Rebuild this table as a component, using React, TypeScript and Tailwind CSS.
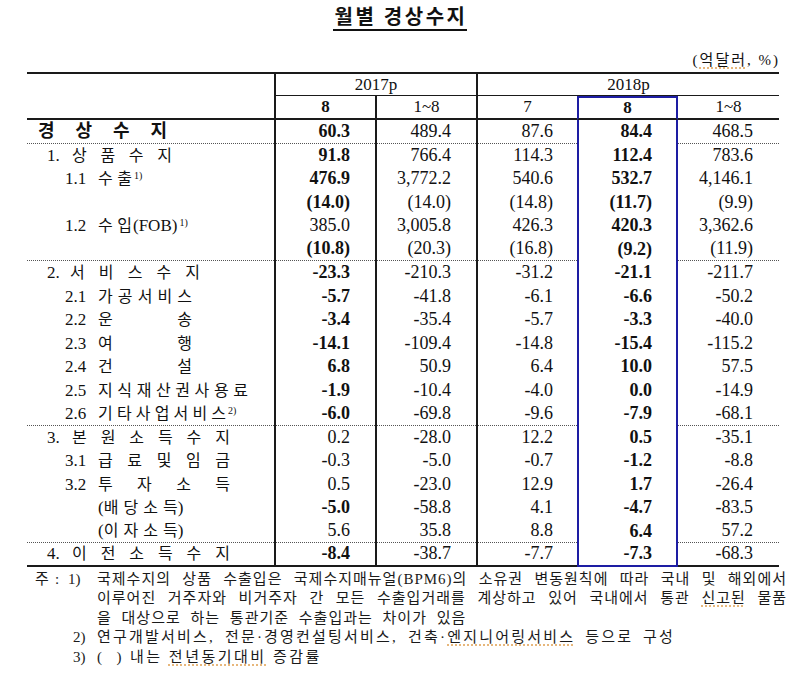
import React from 'react';

type Row = {
  label: React.ReactNode;
  v: string[];
  a: boolean;
  sep?: boolean;
};

const Sp = ({ t, w }: { t: string; w: string }) => (
  <span className={`inline-flex justify-between ${w}`}>
    {Array.from(t).map((c, i) => (
      <span key={i}>{c}</span>
    ))}
  </span>
);

const Pre = ({ children, w }: { children: React.ReactNode; w: string }) => (
  <span className={`inline-block text-[17px] ${w}`}>{children}</span>
);

const Sup = ({ children }: { children: React.ReactNode }) => (
  <sup className="text-[10px] ml-[2px]">{children}</sup>
);

const rows: Row[] = [
  {
    label: (
      <div className="pl-[11px] text-[18px] font-bold">
        <Sp t="경상수지" w="w-[129px]" />
      </div>
    ),
    v: ['60.3', '489.4', '87.6', '84.4', '468.5'],
    a: true,
    sep: true,
  },
  {
    label: (
      <div className="pl-[20px]">
        <Pre w="w-[25px]">1.</Pre>
        <Sp t="상품수지" w="w-[100px]" />
      </div>
    ),
    v: ['91.8', '766.4', '114.3', '112.4', '783.6'],
    a: true,
  },
  {
    label: (
      <div className="pl-[38px]">
        <Pre w="w-[33px]">1.1</Pre>
        <Sp t="수출" w="w-[34px]" />
        <Sup>1)</Sup>
      </div>
    ),
    v: ['476.9', '3,772.2', '540.6', '532.7', '4,146.1'],
    a: true,
  },
  { label: null, v: ['(14.0)', '(14.0)', '(14.8)', '(11.7)', '(9.9)'], a: true },
  {
    label: (
      <div className="pl-[38px]">
        <Pre w="w-[33px]">1.2</Pre>
        <Sp t="수입" w="w-[34px]" />
        <span className="text-[17px] ml-[1px]">(FOB)</span>
        <Sup>1)</Sup>
      </div>
    ),
    v: ['385.0', '3,005.8', '426.3', '420.3', '3,362.6'],
    a: false,
  },
  { label: null, v: ['(10.8)', '(20.3)', '(16.8)', '(9.2)', '(11.9)'], a: true, sep: true },
  {
    label: (
      <div className="pl-[20px]">
        <Pre w="w-[23px]">2.</Pre>
        <Sp t="서비스수지" w="w-[130px]" />
      </div>
    ),
    v: ['-23.3', '-210.3', '-31.2', '-21.1', '-211.7'],
    a: true,
  },
  {
    label: (
      <div className="pl-[38px]">
        <Pre w="w-[33px]">2.1</Pre>
        <Sp t="가공서비스" w="w-[94px]" />
      </div>
    ),
    v: ['-5.7', '-41.8', '-6.1', '-6.6', '-50.2'],
    a: true,
  },
  {
    label: (
      <div className="pl-[38px]">
        <Pre w="w-[33px]">2.2</Pre>
        <Sp t="운송" w="w-[94px]" />
      </div>
    ),
    v: ['-3.4', '-35.4', '-5.7', '-3.3', '-40.0'],
    a: true,
  },
  {
    label: (
      <div className="pl-[38px]">
        <Pre w="w-[33px]">2.3</Pre>
        <Sp t="여행" w="w-[94px]" />
      </div>
    ),
    v: ['-14.1', '-109.4', '-14.8', '-15.4', '-115.2'],
    a: true,
  },
  {
    label: (
      <div className="pl-[38px]">
        <Pre w="w-[33px]">2.4</Pre>
        <Sp t="건설" w="w-[94px]" />
      </div>
    ),
    v: ['6.8', '50.9', '6.4', '10.0', '57.5'],
    a: true,
  },
  {
    label: (
      <div className="pl-[38px]">
        <Pre w="w-[33px]">2.5</Pre>
        <Sp t="지식재산권사용료" w="w-[150px]" />
      </div>
    ),
    v: ['-1.9', '-10.4', '-4.0', '0.0', '-14.9'],
    a: true,
  },
  {
    label: (
      <div className="pl-[38px]">
        <Pre w="w-[33px]">2.6</Pre>
        <Sp t="기타사업서비스" w="w-[128px]" />
        <Sup>2)</Sup>
      </div>
    ),
    v: ['-6.0', '-69.8', '-9.6', '-7.9', '-68.1'],
    a: true,
    sep: true,
  },
  {
    label: (
      <div className="pl-[20px]">
        <Pre w="w-[25px]">3.</Pre>
        <Sp t="본원소득수지" w="w-[158px]" />
      </div>
    ),
    v: ['0.2', '-28.0', '12.2', '0.5', '-35.1'],
    a: false,
  },
  {
    label: (
      <div className="pl-[38px]">
        <Pre w="w-[33px]">3.1</Pre>
        <Sp t="급료및임금" w="w-[132px]" />
      </div>
    ),
    v: ['-0.3', '-5.0', '-0.7', '-1.2', '-8.8'],
    a: false,
  },
  {
    label: (
      <div className="pl-[38px]">
        <Pre w="w-[33px]">3.2</Pre>
        <Sp t="투자소득" w="w-[132px]" />
      </div>
    ),
    v: ['0.5', '-23.0', '12.9', '1.7', '-26.4'],
    a: false,
  },
  {
    label: (
      <div className="pl-[71px]">
        <span className="text-[17px]">(</span>
        <Sp t="배당소득" w="w-[74px]" />
        <span className="text-[17px]">)</span>
      </div>
    ),
    v: ['-5.0', '-58.8', '4.1', '-4.7', '-83.5'],
    a: true,
  },
  {
    label: (
      <div className="pl-[71px]">
        <span className="text-[17px]">(</span>
        <Sp t="이자소득" w="w-[74px]" />
        <span className="text-[17px]">)</span>
      </div>
    ),
    v: ['5.6', '35.8', '8.8', '6.4', '57.2'],
    a: false,
    sep: true,
  },
  {
    label: (
      <div className="pl-[20px]">
        <Pre w="w-[25px]">4.</Pre>
        <Sp t="이전소득수지" w="w-[158px]" />
      </div>
    ),
    v: ['-8.4', '-38.7', '-7.7', '-7.3', '-68.3'],
    a: true,
  },
];

const Cell = ({
  cls,
  inner,
  sep,
  children,
}: {
  cls: string;
  inner: string;
  sep?: boolean;
  children?: React.ReactNode;
}) => (
  <div className={`h-[23.5px] flex flex-col ${cls}`}>
    <div className={`flex-1 min-h-0 flex items-center whitespace-nowrap ${inner}`}>{children}</div>
    {sep ? <div className="h-0 border-t border-dotted border-t-[#555555]" /> : null}
  </div>
);

const Sq = ({ children }: { children: React.ReactNode }) => (
  <span className="underline decoration-dotted decoration-[#e0a050] underline-offset-[3px]">{children}</span>
);

export default function App() {
  return (
    <div className="w-[800px] h-[678px] bg-white text-[#111111] overflow-hidden font-['Liberation_Serif','Noto_Sans_CJK_KR',serif]">
      <div className="pt-[6px] text-center">
        <span className="inline-block text-[20px] leading-[23px] font-bold tracking-[2.5px] pl-[2px] border-b-2 border-[#111111]">
          월별 경상수지
        </span>
      </div>
      <div className="mt-[20px] w-[780px] text-right text-[15px] leading-[18px] tracking-[2px]">
        (<Sq>억달러</Sq>, %)
      </div>

      <div className="ml-[27px] mt-[3px] w-[752px] grid grid-cols-[247px_101px_101px_101px_101px_101px] border-t-2 border-t-[#1a1a1a] text-[17px]">
        {/* header */}
        <div className="row-span-2 border-b-2 border-b-[#1a1a1a]" />
        <div className="col-span-2 h-[22px] border-l-2 border-l-[#1a1a1a] border-b border-b-[#1a1a1a] flex items-center justify-center">
          2017p
        </div>
        <div className="col-span-3 h-[22px] border-l-2 border-l-[#1a1a1a] border-b border-b-[#1a1a1a] flex items-center justify-center">
          2018p
        </div>
        <div className="h-[24px] border-l-2 border-l-[#1a1a1a] border-b-2 border-b-[#1a1a1a] flex items-center justify-center font-bold">
          8
        </div>
        <div className="h-[24px] border-l-2 border-l-[#1a1a1a] border-b-2 border-b-[#1a1a1a] flex items-center justify-center">
          1~8
        </div>
        <div className="h-[24px] border-l-2 border-l-[#1a1a1a] border-b-2 border-b-[#1a1a1a] flex items-center justify-center">
          7
        </div>
        <div className="h-[24px] border-x-2 border-x-[#1d1da3] border-t-2 border-t-[#1d1da3] border-b-2 border-b-[#1a1a1a] flex items-center justify-center font-bold">
          8
        </div>
        <div className="h-[24px] border-b-2 border-b-[#1a1a1a] flex items-center justify-center">
          1~8
        </div>

        {/* body */}
        {rows.map((r, i) => {
          const last = i === rows.length - 1;
          const bottom = last ? 'border-b-2 border-b-[#1a1a1a]' : '';
          return (
            <React.Fragment key={i}>
              <Cell sep={r.sep} cls={bottom} inner="text-[16px]">
                {r.label}
              </Cell>
              <Cell
                sep={r.sep}
                cls={`border-l-2 border-l-[#1a1a1a] ${bottom}`}
                inner={`justify-end pr-[25px] text-[18px] ${r.a ? 'font-bold' : ''}`}
              >
                {r.v[0]}
              </Cell>
              <Cell sep={r.sep} cls={`border-l-2 border-l-[#1a1a1a] ${bottom}`} inner="justify-end pr-[25px] text-[18px]">
                {r.v[1]}
              </Cell>
              <Cell sep={r.sep} cls={`border-l-2 border-l-[#1a1a1a] ${bottom}`} inner="justify-end pr-[24px] text-[18px]">
                {r.v[2]}
              </Cell>
              <Cell
                cls={`border-x-2 border-x-[#1d1da3] ${last ? 'border-b-2 border-b-[#1d1da3]' : ''}`}
                inner="justify-end pr-[24px] font-bold text-[18px]"
              >
                {r.v[3]}
              </Cell>
              <Cell sep={r.sep} cls={bottom} inner="justify-end pr-[26px] text-[18px]">
                {r.v[4]}
              </Cell>
            </React.Fragment>
          );
        })}
      </div>

      {/* footnotes */}
      <div className="ml-[27px] mt-[3px] text-[15px] leading-[19.5px] text-[#1a1a1a]">
        <div className="flex">
          <div className="w-[70px] shrink-0 flex">
            <span className="ml-[8px] w-[20px]">주</span>
            <span className="w-[13px]">:</span>
            <span>1)</span>
          </div>
          <div className="w-[690px] tracking-[1px]">
            <div className="text-justify [text-align-last:justify]">
              국제수지의 상품 수출입은 국제수지매뉴얼(BPM6)의 소유권 변동원칙에 따라 국내 및 해외에서
            </div>
            <div className="text-justify [text-align-last:justify]">
              이루어진 거주자와 비거주자 간 모든 수출입거래를 계상하고 있어 국내에서 통관 <Sq>신고된</Sq> 물품
            </div>
            <div className="[word-spacing:5px]">을 대상으로 하는 통관기준 수출입과는 차이가 있음</div>
          </div>
        </div>
        <div className="flex">
          <div className="w-[70px] shrink-0 pl-[46px]">2)</div>
          <div className="tracking-[2.2px] [word-spacing:4px]">
            연구개발서비스, 전문·경영컨설팅서비스, 건축·<Sq>엔지니어링서비스</Sq> 등으로 구성
          </div>
        </div>
        <div className="flex">
          <div className="w-[70px] shrink-0 pl-[46px]">3)</div>
          <div className="tracking-[2.5px]">
            <span>(</span>
            <span className="ml-[12px]">)</span>
            <span className="ml-[6px]">내는</span> <Sq>전년동기대비</Sq> 증감률
          </div>
        </div>
      </div>
    </div>
  );
}
